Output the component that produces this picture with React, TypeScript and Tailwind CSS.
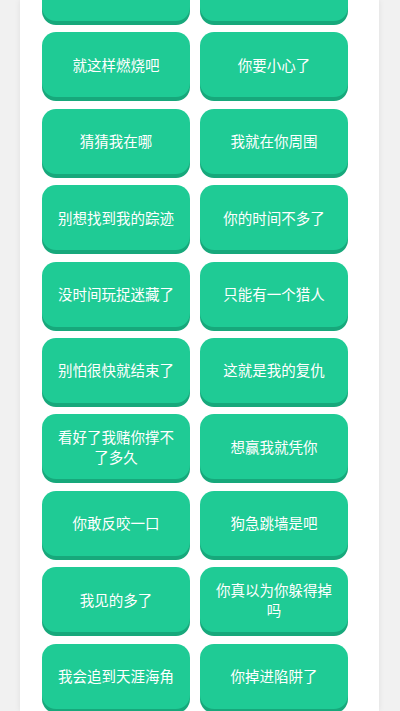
const rows: [string, string][] = [
  ["", ""],
  ["就这样燃烧吧", "你要小心了"],
  ["猜猜我在哪", "我就在你周围"],
  ["别想找到我的踪迹", "你的时间不多了"],
  ["没时间玩捉迷藏了", "只能有一个猎人"],
  ["别怕很快就结束了", "这就是我的复仇"],
  ["看好了我赌你撑不了多久", "想赢我就凭你"],
  ["你敢反咬一口", "狗急跳墙是吧"],
  ["我见的多了", "你真以为你躲得掉吗"],
  ["我会追到天涯海角", "你掉进陷阱了"],
];

function VoiceButton({ label }: { label: string }) {
  return (
    <button className="w-[148px] h-[65px] rounded-[14px] bg-[#1fcb95] shadow-[0_4px_0_#17a87b] px-[13px] flex items-center justify-center text-center text-white text-[14.5px] leading-[20px]">
      {label}
    </button>
  );
}

export default function App() {
  return (
    <div
      className="w-[400px] h-[711px] overflow-hidden bg-[#f1f1f1] flex justify-start"
      style={{ fontFamily: '"Noto Sans CJK SC", "Noto Sans", sans-serif' }}
    >
      {/* white sheet in the middle */}
      <div className="ml-[20px] w-[359px] h-full bg-white shadow-[0_0_6px_rgba(0,0,0,0.08)] pl-[22px]">
        <div className="-mt-[44px] grid grid-cols-[148px_148px] gap-x-[10px] gap-y-[11.4px]">
          {rows.map(([a, b], i) => (
            <div key={i} className="contents">
              <VoiceButton label={a} />
              <VoiceButton label={b} />
            </div>
          ))}
        </div>
      </div>
    </div>
  );
}
